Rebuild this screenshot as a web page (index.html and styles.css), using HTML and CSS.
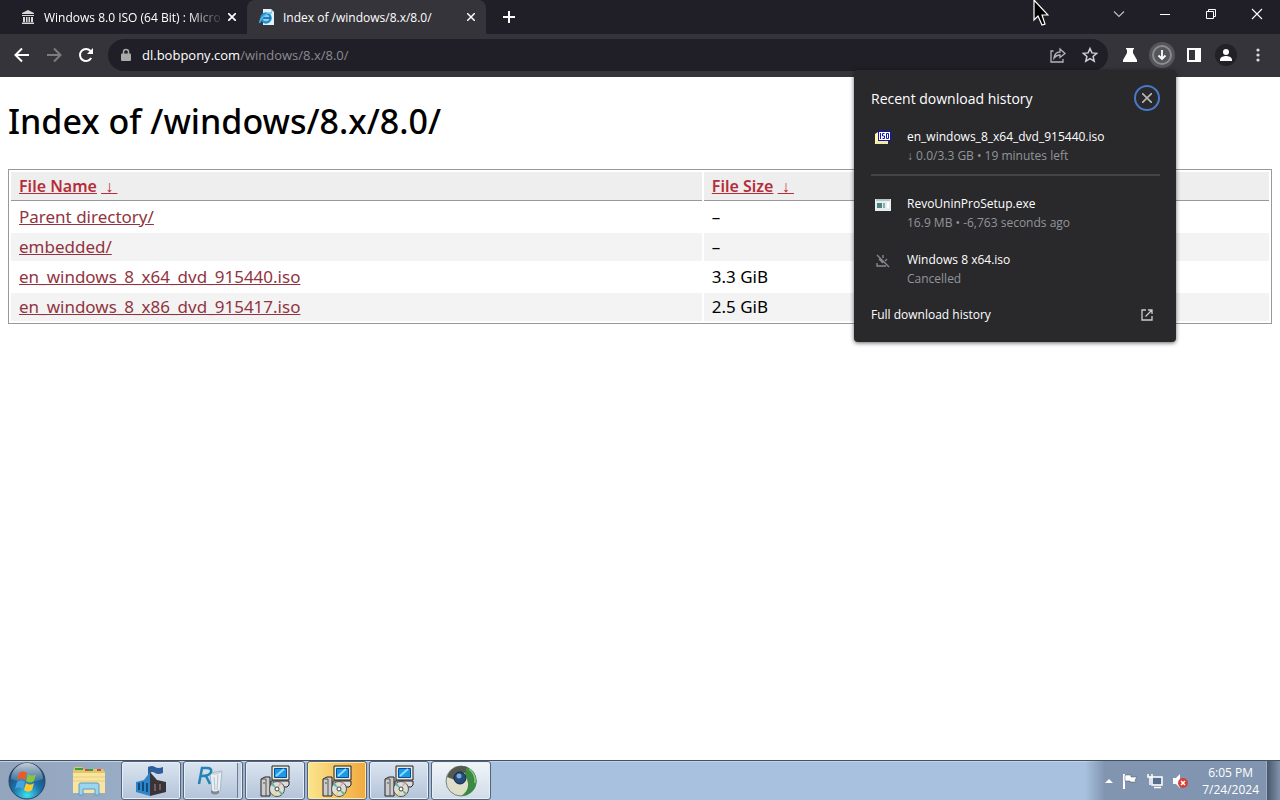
FILE: index.html
```
<!DOCTYPE html>
<html lang="en">
  <head>
    <meta charset="utf-8">
    <title>Index of /windows/8.x/8.0/</title>
    <link rel="stylesheet" href="styles.css">
  </head>
  <body>
    <header class="browser">
      <div class="tabs">
        <div class="tab">
          <svg class="favicon" width="16" height="16" viewBox="0 0 16 16" fill="#d8d8d8">
            <path d="M8 1l6 3v1H2V4zM2 6h12v1H2zM3 8h2v5H3zM6 8h1.500v5H6zM8.500 8H10v5H8.500zM11 8h2v5h-2zM2 13.500h12V15H2z"/>
          </svg>
          <span class="tab-title faded">Windows 8.0 ISO (64 Bit) : Micro</span>
          <button class="tab-close" aria-label="Close tab"><svg width="8" height="8" viewBox="0 0 8 8" stroke="#fff" stroke-width="1.700"><path d="M0 0l8 8M8 0L0 8"/></svg></button>
        </div>
        <div class="tab active">
          <svg class="favicon" width="16" height="16" viewBox="0 0 16 16">
            <path d="M4 0h8l3 3v13H4z" fill="#e4f1f8"/>
            <path d="M12 0v3h3" fill="#a9cfe2"/>
            <circle cx="7" cy="9" r="4.500" fill="#8fd0f0" stroke="#1f8fce" stroke-width="2.500"/>
            <path d="M4 9h8" stroke="#1f6fae" stroke-width="1.800"/>
            <path d="M1 14C0 10 8 3 13 4" fill="none" stroke="#55b8e8" stroke-width="1.400"/>
          </svg>
          <span class="tab-title">Index of /windows/8.x/8.0/</span>
          <button class="tab-close" aria-label="Close tab"><svg width="8" height="8" viewBox="0 0 8 8" stroke="#fff" stroke-width="1.500"><path d="M0 0l8 8M8 0L0 8"/></svg></button>
        </div>
        <button class="new-tab" aria-label="New tab"><svg width="12" height="12" viewBox="0 0 12 12" stroke="#fff" stroke-width="2"><path d="M6 0v12M0 6h12"/></svg></button>
        <div class="window-buttons">
          <button aria-label="Search tabs"><svg width="12" height="12" viewBox="0 0 12 12" fill="none" stroke="#bbb" stroke-width="1.200"><path d="M1 3.500l5 5 5-5"/></svg></button>
          <button aria-label="Minimize"><svg width="12" height="12" viewBox="0 0 12 12" stroke="#fff"><path d="M1 6.500h10"/></svg></button>
          <button aria-label="Restore"><svg width="12" height="12" viewBox="0 0 12 12" fill="none" stroke="#fff"><path d="M1.500 3.500h7v7h-7zM3.500 3.500v-2h7v7h-2"/></svg></button>
          <button aria-label="Close"><svg width="12" height="12" viewBox="0 0 12 12" stroke="#fff" stroke-width="1.100"><path d="M1 1l10 10M11 1L1 11"/></svg></button>
        </div>
      </div>

      <div class="toolbar">
        <button class="tool" aria-label="Back"><svg width="16" height="16" viewBox="0 0 16 16" fill="none" stroke="#fff" stroke-width="2"><path d="M15 8H2M8 1.500L1.500 8 8 14.500"/></svg></button>
        <button class="tool" aria-label="Forward" disabled><svg width="16" height="16" viewBox="0 0 16 16" fill="none" stroke="#7d7d80" stroke-width="2"><path d="M1 8h13M8 1.500L14.500 8 8 14.500"/></svg></button>
        <button class="tool" aria-label="Reload"><svg width="16" height="16" viewBox="0 0 16 16"><path d="M13.200 11A6 6 0 1 1 12.500 4" fill="none" stroke="#fff" stroke-width="2"/><path d="M15 1v6H9z" fill="#fff"/></svg></button>
        <div class="address">
          <svg width="10" height="14" viewBox="0 0 10 14"><path d="M2.500 6V4a2.500 2.500 0 0 1 5 0v2" fill="none" stroke="#aaa" stroke-width="1.500"/><rect y="5.500" width="10" height="7.500" rx="1" fill="#aaa"/></svg>
          <a class="url" href="#">dl.bobpony.com<span>/windows/8.x/8.0/</span></a>
          <button class="tool" aria-label="Share"><svg width="16" height="16" viewBox="0 0 16 16" fill="none" stroke="#b4b4b8" stroke-width="1.300"><path d="M3.500 4H1v11h12v-3M4 11c.5-4 3-6 6-6V2l5 4.500-5 4V8C7.500 8 5.500 9 4 11z"/></svg></button>
          <button class="tool" aria-label="Bookmark"><svg width="16" height="16" viewBox="0 0 16 16" fill="none" stroke="#d0d0d3" stroke-width="1.500"><path d="M8 1.500l1.900 4.400 4.800.4-3.600 3.100 1.100 4.700L8 11.600l-4.200 2.500 1.100-4.700-3.600-3.100 4.800-.4z"/></svg></button>
        </div>
        <button class="tool" aria-label="Labs"><svg width="16" height="16" viewBox="0 0 16 16" fill="#fff"><path d="M4 1h8v1.500h-1V6l4 7v2H1v-2l4-7V2.500H4z"/></svg></button>
        <button class="tool" aria-label="Downloads"><svg width="26" height="26" viewBox="0 0 26 26" fill="none"><circle cx="13" cy="13" r="13" fill="#55565a"/><circle cx="13" cy="13" r="9" stroke="#8b8c8f" stroke-width="2"/><path d="M13 8v9M9.500 13.500L13 17l3.500-3.500" stroke="#fff" stroke-width="1.800"/></svg></button>
        <button class="tool" aria-label="Side panel"><svg width="14" height="14" viewBox="0 0 14 14"><path d="M0 0h14v14H0zM2 2v10h6V2z" fill="#fff" fill-rule="evenodd"/></svg></button>
        <button class="tool" aria-label="Profile"><svg width="22" height="22" viewBox="0 0 22 22" fill="#fff"><circle cx="11" cy="11" r="11" fill="#222226"/><circle cx="11" cy="8" r="3"/><path d="M5 17v-1.500C5 13 9 12 11 12s6 1 6 3.500V17z"/></svg></button>
        <button class="tool" aria-label="Menu"><svg width="4" height="14" viewBox="0 0 4 14" fill="#ddd"><circle cx="2" cy="2" r="1.600"/><circle cx="2" cy="7" r="1.600"/><circle cx="2" cy="12" r="1.600"/></svg></button>
      </div>

      <section class="downloads">
        <div class="downloads-head">
          <h2>Recent download history</h2>
          <button class="downloads-close" aria-label="Close"><svg width="10" height="10" viewBox="0 0 10 10" stroke="#b8b8b8" stroke-width="1.600"><path d="M0 0l10 10M10 0L0 10"/></svg></button>
        </div>
        <div class="download current">
          <svg width="16" height="16" viewBox="0 0 16 16"><path d="M0 4l3-2v12H0z" fill="#fff8b0"/><path d="M1 11h12v3H1z" fill="#f3eaa0"/><path d="M3 1h13v10H3z" fill="#1414b8"/><path d="M4 2h11v8H4z" fill="#fff"/><path d="M5.500 3v6M9.500 3.500h-2v2.500h2v2.500h-2M11.500 3.500h2v5h-2z" fill="none" stroke="#1414b8"/></svg>
          <div>
            <div class="name">en_windows_8_x64_dvd_915440.iso</div>
            <div class="status">↓ 0.0/3.3 GB • 19 minutes left</div>
          </div>
        </div>
        <div class="download">
          <svg width="16" height="16" viewBox="0 0 16 16"><path d="M0 2h16v12H0z" fill="#e4eeee"/><path d="M1 2h14v2H1z" fill="#b7c7c7"/><path d="M2 6h5v5H2z" fill="#4e8080"/><path d="M8 6h2v5H8z" fill="#8cabab"/><path d="M12 5h2v6h-2z" fill="#fff"/></svg>
          <div>
            <div class="name">RevoUninProSetup.exe</div>
            <div class="status">16.9 MB • -6,763 seconds ago</div>
          </div>
        </div>
        <div class="download">
          <svg width="16" height="16" viewBox="0 0 16 16" fill="none" stroke="#88898c" stroke-width="1.400"><path d="M2 2l12 12M8 2v3M12 6l-2 2M2 10v3h9M4 6l4 4"/></svg>
          <div>
            <div class="name">Windows 8 x64.iso</div>
            <div class="status">Cancelled</div>
          </div>
        </div>
        <a class="full-history" href="#">Full download history
          <svg width="12" height="12" viewBox="0 0 12 12" fill="none" stroke="#ccc" stroke-width="1.300"><path d="M5 1H1v10h10V7M7 1h4v4M11 1L4.500 7.500"/></svg>
        </a>
      </section>
    </header>

    <main>
      <h1>Index of /windows/8.x/8.0/</h1>
      <table class="list">
        <thead>
          <tr>
            <th class="file"><a href="#">File Name</a> <a href="#">&nbsp;↓&nbsp;</a></th>
            <th><a href="#">File Size</a> <a href="#">&nbsp;↓&nbsp;</a></th>
          </tr>
        </thead>
        <tbody>
          <tr><td><a href="#">Parent directory/</a></td><td>–</td></tr>
          <tr><td><a href="#">embedded/</a></td><td>–</td></tr>
          <tr><td><a href="#">en_windows_8_x64_dvd_915440.iso</a></td><td>3.3 GiB</td></tr>
          <tr><td><a href="#">en_windows_8_x86_dvd_915417.iso</a></td><td>2.5 GiB</td></tr>
        </tbody>
      </table>
    </main>

    <footer class="taskbar">
      <button class="start" aria-label="Start">
        <svg width="38" height="38" viewBox="0 0 38 38">
          <defs>
            <radialGradient id="orb" cx=".5" cy=".9" r=".9"><stop offset="0" stop-color="#3fe0f0"/><stop offset=".45" stop-color="#1c6fa8"/><stop offset="1" stop-color="#173a63"/></radialGradient>
            <linearGradient id="shine" x2="0" y2="1"><stop offset="0" stop-color="#fff" stop-opacity=".75"/><stop offset="1" stop-color="#fff" stop-opacity=".1"/></linearGradient>
          </defs>
          <circle cx="19" cy="19" r="18" fill="url(#orb)" stroke="#28425f"/>
          <path d="M3 17a16 16 0 0 1 32 0c-9 4-23 4-32 0z" fill="url(#shine)"/>
          <path d="M11 11c3-2 5-2 8 0l-2 7c-3-2-5-2-8 0z" fill="#ee5a24"/>
          <path d="M20 12c3 2 5 2 8 0l-2 7c-3 2-5 2-8 0z" fill="#8ac43f"/>
          <path d="M9 20c3-2 5-2 8 0l-2 7c-3-2-5-2-8 0z" fill="#45a4e0"/>
          <path d="M18 21c3 2 5 2 8 0l-2 7c-3 2-5 2-8 0z" fill="#fdc92d"/>
        </svg>
      </button>
      <button class="task pinned" aria-label="Windows Explorer">
        <svg width="34" height="30" viewBox="0 0 34 30">
          <path d="M1 4l2-3h7l2 2h19l2 3v21H1z" fill="#e5c565"/>
          <path d="M3 3h8M15 4h6" stroke="#389c48" stroke-width="2"/><path d="M13 4h3M25 4h4" stroke="#d34b3c" stroke-width="2"/>
          <path d="M1 7h32v20H1z" fill="#f7e5a0"/><path d="M1 11h32M1 15h32" stroke="#e8cf7c"/>
          <path d="M7 29V19q0-2 2-2h16q2 0 2 2v10h-4v-6H11v6z" fill="#9bd4f2" stroke="#5b9dc8"/>
        </svg>
      </button>
      <button class="task" aria-label="Setup">
        <svg width="34" height="32" viewBox="0 0 34 32">
          <path d="M14 2q4-2 7 0t8 0v6q-5 2-8 0t-5 0v5h-2z" fill="#2d5f9e"/>
          <path d="M2 17l8-2 6-8v24L2 27z" fill="#2c86c9"/>
          <path d="M16 7l7 8 9 2v10l-16 4z" fill="#3a3338"/>
          <path d="M5 18v7M9 17v9M13 18v9" stroke="#14497c" stroke-width="2"/><path d="M21 19v7M26 19v6" stroke="#715e62" stroke-width="2"/>
        </svg>
      </button>
      <button class="task stacked" aria-label="Revo Uninstaller">
        <svg width="30" height="32" viewBox="0 0 30 32">
          <path d="M14 8l12-2-2 21q-4 3-8 0z" fill="#e9eff5" stroke="#a9b6c4"/>
          <path d="M14 8q6 3 12-2M18 12l1 13M22 10l-1 15" fill="none" stroke="#b4c0cc"/>
          <path d="M15 25q4 3 8 0v3q-4 3-8 0z" fill="#7d8893"/>
          <path d="M3 19L6 3h5q5 0 4 4-1 4-10 4M10 11l4 8" fill="none" stroke="#2383b4" stroke-width="2.500"/>
        </svg>
      </button>
      <button class="task" aria-label="Installer">
        <svg width="32" height="32" viewBox="0 0 32 32">
          <defs>
            <g id="installer">
              <path d="M2 14l4-2h5v19H2z" fill="#ccc" stroke="#222"/><path d="M2 14h5v17M4 18h2" fill="none" stroke="#555"/>
              <path d="M12 16h18v4l-2 2H12z" fill="#ddd" stroke="#222"/>
              <path d="M13 1h17v14H13z" fill="#e8e8dc" stroke="#222"/>
              <path d="M15.500 3.500h12v9h-12z" fill="#189bea" stroke="#124b91"/><path d="M17 11l8-7" stroke="#8edcff" stroke-width="2"/>
              <circle cx="18" cy="24" r="7.500" fill="#dcded8" stroke="#555"/>
              <path d="M18 24l-6-4 2-2z" fill="#65b6a5"/><path d="M18 24l6 4-2 2z" fill="#75b874"/><path d="M18 24l3-7 2 1z" fill="#d7a8b4"/><path d="M18 24l-4 6 2 1z" fill="#e4d97a"/>
              <circle cx="18" cy="24" r="2" fill="#fff" stroke="#444"/>
            </g>
          </defs>
          <use href="#installer"/>
        </svg>
      </button>
      <button class="task alert" aria-label="Installer"><svg width="32" height="32" viewBox="0 0 32 32"><use href="#installer"/></svg></button>
      <button class="task" aria-label="Installer"><svg width="32" height="32" viewBox="0 0 32 32"><use href="#installer"/></svg></button>
      <button class="task focused" aria-label="Chromium">
        <svg width="32" height="32" viewBox="0 0 32 32">
          <circle cx="16" cy="16" r="15" fill="#dddfc8" stroke="#7c857c"/>
          <path d="M2 12A15 15 0 0 1 22 2l-1 6q-9-2-11 7z" fill="#545a52"/>
          <path d="M22 2a15 15 0 0 1-6 29q8-5 7-13-1-5-3-9z" fill="#3c8a42"/>
          <path d="M24 4q7 5 6 14" fill="none" stroke="#8cc98c" stroke-width="1.500"/>
          <circle cx="15" cy="13" r="6" fill="#234c7c" stroke="#17233b"/><circle cx="14" cy="11" r="2.500" fill="#7ba9d8"/>
        </svg>
      </button>
      <div class="tray">
        <svg width="8" height="4" viewBox="0 0 8 4" fill="#fff"><path d="M0 4l4-4 4 4z"/></svg>
        <svg width="16" height="16" viewBox="0 0 16 16"><path d="M2 1v15" stroke="#fff" stroke-width="2"/><path d="M3 2h6v2h6l-2 3 1 2H8V8H3z" fill="#fff" stroke="#44566e" stroke-width=".5"/></svg>
        <svg width="16" height="16" viewBox="0 0 16 16" fill="none"><path d="M5 4h10v8H5zM7 14.500h7" stroke="#fff" stroke-width="1.500"/><path d="M6 5h8v6H6z" fill="#586f8c"/><path d="M1 1v3h4V1M3 4v8" stroke="#fff" stroke-width="1.500"/></svg>
        <svg width="16" height="16" viewBox="0 0 16 16"><path d="M1 5h3l4-4v14l-4-4H1z" fill="#fff"/><circle cx="11" cy="10" r="5" fill="#d4403a"/><path d="M9 8l4 4M13 8l-4 4" stroke="#fff" stroke-width="1.500"/></svg>
        <time class="clock">6:05 PM<br>7/24/2024</time>
      </div>
      <button class="show-desktop" aria-label="Show desktop"></button>
    </footer>

    <svg class="cursor" width="16" height="26" viewBox="0 0 16 26"><path d="M1 0v20l4-4 4 9 3-1-3-9h6z" fill="#000" stroke="#fff" stroke-width="1.200"/></svg>
  </body>
</html>
```
FILE: styles.css
```
body {
  margin: 0;
  min-height: 100vh;
  display: flex;
  flex-direction: column;
  background: #fff;
  font-family: "Open Sans", "Noto Sans", sans-serif;
  font-size: 12px;
}
button {
  display: flex;
  align-items: center;
  justify-content: center;
  padding: 0;
  border: 0;
  background: none;
}
svg {
  display: block;
  flex: none;
}

/* browser */
.browser {
  position: relative;
  background: #35343a;
  color: #fff;
}
.tabs {
  display: flex;
  height: 34px;
  padding-left: 8px;
  background: #201f27;
}
.tab {
  display: flex;
  align-items: center;
  box-sizing: border-box;
  width: 239px;
  padding: 0 7px 0 12px;
  border-radius: 8px 8px 0 0;
}
.tab.active {
  background: #35343a;
}
.tab-title {
  flex: 1;
  margin-left: 8px;
  white-space: nowrap;
}
.faded {
  mask-image: linear-gradient(to right, #000 80%, transparent);
}
.tab-close {
  width: 16px;
  height: 16px;
}
.new-tab {
  width: 46px;
}
.window-buttons {
  display: flex;
  margin-left: auto;
  height: 28px;
}
.window-buttons button {
  width: 46px;
}
.toolbar {
  display: flex;
  align-items: center;
  box-sizing: border-box;
  height: 43px;
  padding: 0 6px 1px;
}
.tool {
  width: 32px;
  height: 32px;
}
.address {
  display: flex;
  align-items: center;
  flex: 1;
  height: 32px;
  margin: 0 6px;
  padding: 0 2px 0 13px;
  border-radius: 16px;
  background: #201f27;
}
.url {
  flex: 1;
  margin-left: 11px;
  color: #fff;
  font-size: 13px;
  text-decoration: none;
}
.url span {
  color: #8b8b90;
}

/* download bubble */
.downloads {
  position: absolute;
  top: 70px;
  right: 104px;
  box-sizing: border-box;
  width: 322px;
  padding: 12px 16px 17px 17px;
  border-radius: 4px;
  background: #29292c;
  box-shadow: 0 1px 4px rgba(0, 0, 0, .6);
}
.downloads-head {
  display: flex;
  align-items: center;
  justify-content: space-between;
  height: 32px;
}
.downloads h2 {
  margin: 0;
  font-size: 14px;
  font-weight: 400;
}
.downloads-close {
  box-sizing: border-box;
  width: 26px;
  height: 26px;
  border: 2px solid #4a78c8;
  border-radius: 50%;
}
.download {
  display: flex;
  gap: 16px;
  padding: 9px 4px;
  line-height: 19px;
}
.download svg {
  margin-top: 3px;
}
.download.current {
  padding-top: 13px;
  margin-bottom: 9px;
  border-bottom: 2px solid #454548;
}
.status {
  color: #929599;
}
.full-history {
  display: flex;
  align-items: center;
  justify-content: space-between;
  margin-top: 8px;
  padding-right: 7px;
  line-height: 20px;
  color: #fff;
  text-decoration: none;
}

/* directory listing */
main {
  flex: 1;
  padding: 19px 8px;
  font-family: "Noto Sans", sans-serif;
}
h1 {
  margin: 0 0 23px;
  font-size: 34px;
  font-weight: 500;
  line-height: 50px;
}
.list {
  width: 100%;
  border: 1px solid #999;
  border-spacing: 2px;
}
.list th, .list td {
  padding: 2px 8px;
  font-size: 17px;
  line-height: 24px;
  text-align: left;
}
.list th {
  border-bottom: 1px solid #999;
  background: #eee;
  font-size: 16px;
  font-weight: 600;
}
.list .file {
  box-sizing: border-box;
  width: 55%;
}
.list tbody tr:nth-child(even) {
  background: #f3f3f3;
}
.list a {
  color: #923440;
}
.list th a {
  color: #b52d38;
}

/* taskbar */
.taskbar {
  display: flex;
  box-sizing: border-box;
  height: 40px;
  padding-left: 8px;
  border-top: 1px solid #435165;
  background: linear-gradient(to right, #93a5bd, #a8c1de 500px);
  box-shadow: inset 0 1px #c3d3e5;
}
.start {
  width: 38px;
  margin-right: 13px;
}
.task {
  box-sizing: border-box;
  width: 60px;
  margin-right: 2px;
  border: 1px solid #53647b;
  border-radius: 3px;
  background: linear-gradient(#dbe5f1, #b3c3d8);
  box-shadow: inset 0 0 0 1px #e7eef7;
}
.task.pinned {
  border-color: transparent;
  background: none;
  box-shadow: none;
}
.task.stacked {
  padding-right: 4px;
  box-shadow: inset 0 0 0 1px #e7eef7, inset -4px 0 #c3d0e1, inset -5px 0 #6c7e96;
}
.task.alert {
  background: linear-gradient(to right, #fbe58c, #f1a93e);
  box-shadow: inset 0 0 0 1px #ffe9ac;
}
.task.focused {
  background: linear-gradient(#f1f5f9, #cfdce8);
}
.tray {
  display: flex;
  align-items: center;
  gap: 9px;
  margin-left: auto;
  padding: 0 7px 0 20px;
  background: linear-gradient(to right, transparent, #8195b0 20px);
  color: #fff;
}
.clock {
  margin-left: 5px;
  line-height: 17px;
  text-align: center;
}
.show-desktop {
  width: 14px;
  border-left: 1px solid #9db0c6;
  background: linear-gradient(to right, #48576c, #8193ab);
}
.cursor {
  position: absolute;
  top: 0;
  left: 1033px;
}
```
